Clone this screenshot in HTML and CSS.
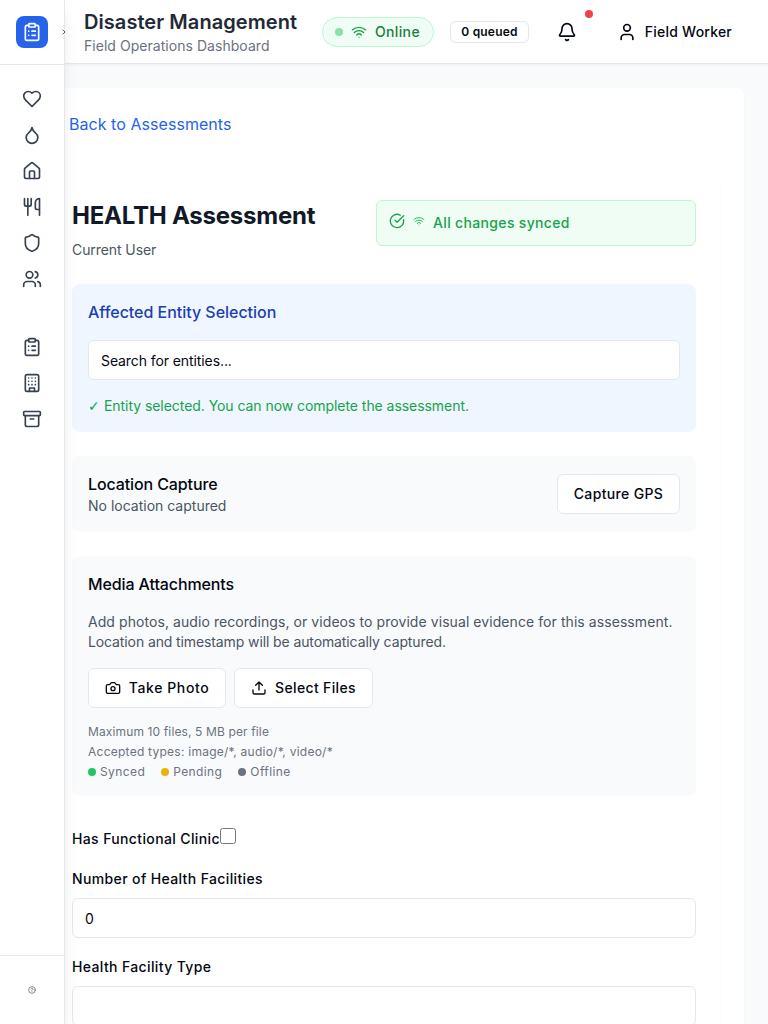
FILE: index.html
```html
<!DOCTYPE html>
<html lang="en">
<head>
<meta charset="utf-8">
<title>Disaster Management</title>
<link rel="stylesheet" href="styles.css">
</head>
<body>
<svg class="defs" aria-hidden="true">
  <symbol id="clipboard" viewBox="0 0 24 24"><rect width="8" height="4" x="8" y="2" rx="1"/><path d="M16 4h2a2 2 0 0 1 2 2v14a2 2 0 0 1-2 2H6a2 2 0 0 1-2-2V6a2 2 0 0 1 2-2h2"/><path d="M12 11h4M12 16h4M8 11h.01M8 16h.01"/></symbol>
  <symbol id="wifi" viewBox="0 0 24 24"><path d="M12 20h.01M2 8.82a15 15 0 0 1 20 0M5 12.859a10 10 0 0 1 14 0M8.5 16.429a5 5 0 0 1 7 0"/></symbol>
</svg>
<div class="app">
  <aside class="sidebar">
    <div class="sidebar-head">
      <div class="logo"><svg class="icon icon-md"><use href="#clipboard"/></svg></div>
      <svg class="icon toggle" viewBox="0 0 24 24"><path d="m9 18 6-6-6-6"/></svg>
    </div>
    <nav class="nav">
      <div class="nav-group">
        <a class="nav-item"><svg class="icon icon-md" viewBox="0 0 24 24"><path d="M19 14c1.49-1.46 3-3.21 3-5.5A5.5 5.5 0 0 0 16.500 3c-1.760 0-3 .5-4.500 2-1.500-1.500-2.740-2-4.500-2A5.500 5.500 0 0 0 2 8.500c0 2.300 1.500 4.050 3 5.500l7 7Z"/></svg></a>
        <a class="nav-item"><svg class="icon icon-md" viewBox="0 0 24 24"><path d="M12 22a7 7 0 0 0 7-7c0-2-1-3.900-3-5.500s-3.500-4-4-6.500c-.5 2.500-2 4.900-4 6.500C6 11.100 5 13 5 15a7 7 0 0 0 7 7z"/></svg></a>
        <a class="nav-item"><svg class="icon icon-md" viewBox="0 0 24 24"><path d="M15 21v-8a1 1 0 0 0-1-1h-4a1 1 0 0 0-1 1v8"/><path d="M3 10a2 2 0 0 1 .709-1.528l7-5.999a2 2 0 0 1 2.582 0l7 5.999A2 2 0 0 1 21 10v9a2 2 0 0 1-2 2H5a2 2 0 0 1-2-2z"/></svg></a>
        <a class="nav-item"><svg class="icon icon-md" viewBox="0 0 24 24"><path d="M3 2v7c0 1.100.9 2 2 2h4a2 2 0 0 0 2-2V2M7 2v20M21 15V2a5 5 0 0 0-5 5v6c0 1.100.9 2 2 2h3Zm0 0v7"/></svg></a>
        <a class="nav-item"><svg class="icon icon-md" viewBox="0 0 24 24"><path d="M20 13c0 5-3.500 7.500-7.660 8.950a1 1 0 0 1-.67-.01C7.500 20.500 4 18 4 13V6a1 1 0 0 1 1-1c2 0 4.500-1.200 6.240-2.720a1.170 1.170 0 0 1 1.520 0C14.510 3.810 17 5 19 5a1 1 0 0 1 1 1z"/></svg></a>
        <a class="nav-item"><svg class="icon icon-md" viewBox="0 0 24 24"><path d="M16 21v-2a4 4 0 0 0-4-4H6a4 4 0 0 0-4 4v2"/><circle cx="9" cy="7" r="4"/><path d="M22 21v-2a4 4 0 0 0-3-3.870M16 3.130a4 4 0 0 1 0 7.750"/></svg></a>
      </div>
      <div class="nav-group">
        <a class="nav-item"><svg class="icon icon-md"><use href="#clipboard"/></svg></a>
        <a class="nav-item"><svg class="icon icon-md" viewBox="0 0 24 24"><rect width="16" height="20" x="4" y="2" rx="2"/><path d="M9 22v-4h6v4M8 6h.01M16 6h.01M12 6h.01M12 10h.01M12 14h.01M16 10h.01M16 14h.01M8 10h.01M8 14h.01"/></svg></a>
        <a class="nav-item"><svg class="icon icon-md" viewBox="0 0 24 24"><rect width="20" height="5" x="2" y="3" rx="1"/><path d="M4 8v11a2 2 0 0 0 2 2h12a2 2 0 0 0 2-2V8M10 12h4"/></svg></a>
      </div>
    </nav>
    <div class="sidebar-foot"><svg class="icon help" viewBox="0 0 24 24"><circle cx="12" cy="12" r="10"/><path d="M9.090 9a3 3 0 0 1 5.830 1c0 2-3 3-3 3M12 17h.01"/></svg></div>
  </aside>
  <div class="page">
    <header class="topbar">
      <div class="brand">
        <h1 class="brand-title">Disaster Management</h1>
        <p class="brand-sub">Field Operations Dashboard</p>
      </div>
      <div class="status"><span class="dot dot-online"></span><svg class="icon icon-sm"><use href="#wifi"/></svg><span class="status-text">Online</span></div>
      <div class="queue">0 queued</div>
      <div class="bell">
        <svg class="icon icon-md" viewBox="0 0 24 24"><path d="M10.268 21a2 2 0 0 0 3.464 0"/><path d="M3.262 15.326A1 1 0 0 0 4 17h16a1 1 0 0 0 .740-1.673C19.410 13.956 18 12.499 18 8A6 6 0 0 0 6 8c0 4.499-1.411 5.956-2.738 7.326"/></svg>
        <span class="bell-badge"></span>
      </div>
      <div class="user"><svg class="icon icon-md" viewBox="0 0 24 24"><path d="M19 21v-2a4 4 0 0 0-4-4H9a4 4 0 0 0-4 4v2"/><circle cx="12" cy="7" r="4"/></svg><span>Field Worker</span></div>
    </header>
    <main class="main">
      <div class="panel">
        <a class="back">Back to Assessments</a>
        <div class="form">
          <div class="form-head">
            <div class="form-heading">
              <h2 class="form-title">HEALTH Assessment</h2>
              <p class="form-user">Current User</p>
            </div>
            <div class="sync">
              <svg class="icon icon-sm sync-check" viewBox="0 0 24 24"><path d="M21.801 10A10 10 0 1 1 17 3.335"/><path d="m9 11 3 3L22 4"/></svg>
              <svg class="icon sync-wifi"><use href="#wifi"/></svg>
              <span>All changes synced</span>
            </div>
          </div>
          <section class="card entity">
            <h3 class="card-title">Affected Entity Selection</h3>
            <div class="field entity-search">Search for entities...</div>
            <p class="entity-ok"><span class="tick">✓</span>Entity selected. You can now complete the assessment.</p>
          </section>
          <section class="card location">
            <div>
              <h3 class="card-title">Location Capture</h3>
              <p class="location-text">No location captured</p>
            </div>
            <button class="btn btn-gps">Capture GPS</button>
          </section>
          <section class="card media">
            <h3 class="card-title">Media Attachments</h3>
            <p class="media-text"><span class="media-lead">Add photos, audio recordings, or videos to provide visual evidence for this assessment.</span><br>Location and timestamp will be automatically captured.</p>
            <div class="btn-row">
              <button class="btn btn-photo"><svg class="icon icon-sm" viewBox="0 0 24 24"><path d="M14.500 4h-5L7 7H4a2 2 0 0 0-2 2v9a2 2 0 0 0 2 2h16a2 2 0 0 0 2-2V9a2 2 0 0 0-2-2h-3l-2.500-3z"/><circle cx="12" cy="13" r="3"/></svg>Take Photo</button>
              <button class="btn btn-files"><svg class="icon icon-sm" viewBox="0 0 24 24"><path d="M21 15v4a2 2 0 0 1-2 2H5a2 2 0 0 1-2-2v-4M17 8l-5-5-5 5M12 3v12"/></svg>Select Files</button>
            </div>
            <div class="notes">
              <p class="note-size">Maximum 10 files, 5 MB per file</p>
              <p class="note-types">Accepted types: image/*, audio/*, video/*</p>
              <div class="legend">
                <span class="legend-item"><i class="dot dot-green"></i>Synced</span>
                <span class="legend-item"><i class="dot dot-yellow"></i>Pending</span>
                <span class="legend-item"><i class="dot dot-gray"></i>Offline</span>
              </div>
            </div>
          </section>
          <div class="check-row"><label class="label">Has Functional Clinic</label><input class="checkbox" type="checkbox"></div>
          <div class="form-item">
            <label class="label">Number of Health Facilities</label>
            <div class="field">0</div>
          </div>
          <div class="form-item">
            <label class="label">Health Facility Type</label>
            <div class="field"></div>
          </div>
        </div>
      </div>
    </main>
  </div>
</div>
</body>
</html>
```
FILE: styles.css
```css
*, *::before, *::after { box-sizing: border-box; }
body, h1, h2, h3, p { margin: 0; }
body { font: 400 14px/20px Inter, "Liberation Sans", sans-serif; color: #030712; background: #f9fafb; overflow: hidden; }
.defs { position: absolute; width: 0; height: 0; }
.icon { display: block; flex: none; fill: none; stroke: currentColor; stroke-width: 2; stroke-linecap: round; stroke-linejoin: round; }
.icon-md { width: 20px; height: 20px; }
.icon-sm { width: 16px; height: 16px; }
.dot { display: block; flex: none; width: 8px; height: 8px; border-radius: 50%; }

.app { display: flex; height: 1024px; overflow: hidden; }

.sidebar { position: relative; z-index: 2; display: flex; flex-direction: column; flex: none; width: 65px; background: #fff; border-right: 1px solid #e5e7eb; box-shadow: 0 10px 15px -3px rgba(0,0,0,.1), 0 4px 6px -4px rgba(0,0,0,.1); }
.sidebar-head { display: flex; align-items: center; height: 65px; padding: 0 0 0 16px; border-bottom: 1px solid #e5e7eb; }
.logo { display: flex; align-items: center; justify-content: center; flex: none; width: 32px; height: 32px; border-radius: 8px; background: #2563eb; color: #fff; }
.toggle { width: 8px; height: 8px; margin-left: 12px; }
.nav { display: flex; flex-direction: column; flex: 1; gap: 32px; padding: 16px 8px; color: #374151; }
.nav-item { display: flex; align-items: center; justify-content: center; height: 36px; }
.sidebar-foot { display: flex; align-items: center; justify-content: center; height: 69px; border-top: 1px solid #e5e7eb; color: #4b5563; }
.help { width: 8px; height: 8px; }

.page { display: flex; flex-direction: column; flex: 1; min-width: 0; }
.topbar { display: flex; align-items: center; flex: none; height: 64px; padding: 0 36px 0 19px; background: #fff; border-bottom: 1px solid #e5e7eb; box-shadow: 0 1px 2px rgba(0,0,0,.05); white-space: nowrap; }
.brand { flex: none; width: 238px; }
.brand-title { font-size: 20px; line-height: 28px; font-weight: 600; letter-spacing: .06px; color: #1f2937; }
.brand-sub { letter-spacing: .04px; color: #6b7280; }
.status { display: flex; align-items: center; gap: 8px; width: 112px; height: 30px; padding: 0 12px; border: 1px solid #bbf7d0; border-radius: 15px; background: #f0fdf4; color: #16a34a; }
.status-text { font-weight: 500; letter-spacing: .35px; color: #15803d; }
.dot-online { background: #86e2a8; }
.queue { width: 79px; height: 22px; margin-left: 16px; border: 1px solid #e5e7eb; border-radius: 6px; font-size: 12px; line-height: 20px; font-weight: 600; letter-spacing: .2px; text-align: center; }
.bell { position: relative; margin-left: 28px; }
.bell-badge { position: absolute; top: -12px; right: -16px; width: 8px; height: 8px; border-radius: 50%; background: #ef4444; }
.user { display: flex; align-items: center; gap: 8px; margin-left: auto; font-weight: 500; letter-spacing: .22px; }

.main { padding: 24px 24px 0 0; }
.panel { height: 1400px; padding: 24px 24px 0 0; border-radius: 0 8px 0 0; background: #fff; box-shadow: 0 1px 2px rgba(0,0,0,.05); }
.back { display: block; padding-left: 4px; font-size: 16px; line-height: 24px; letter-spacing: .05px; color: #2563eb; }
.form { margin-top: 40px; padding: 24px 24px 0 7px; height: 1200px; border-radius: 0 8px 0 0; box-shadow: 0 1px 2px rgba(0,0,0,.05); background: #fff; }
.form-head { display: flex; justify-content: space-between; height: 84px; }
.form-title { font-size: 24px; line-height: 32px; font-weight: 700; letter-spacing: -.22px; color: #111827; }
.form-user { margin-top: 8px; letter-spacing: -.08px; color: #4b5563; }
.sync { display: flex; align-items: center; width: 320px; height: 46px; padding: 0 12px; border: 1px solid #bbf7d0; border-radius: 6px; background: #f0fdf4; color: #16a34a; font-weight: 500; letter-spacing: .34px; }
.sync-check { margin-bottom: 4px; }
.sync-wifi { width: 12px; height: 12px; margin: 0 8px 4px; color: #22c55e; }

.card { margin-bottom: 24px; padding: 16px; border-radius: 8px; background: #f9fafb; }
.card-title { font-size: 16px; line-height: 24px; font-weight: 500; letter-spacing: -.11px; }
.entity { height: 148px; background: #eff6ff; }
.entity .card-title { letter-spacing: -.03px; color: #1e40af; }
.field { height: 40px; padding: 10px 12px 8px; border: 1px solid #e5e7eb; border-radius: 6px; background: #fff; }
.entity-search { margin-top: 16px; letter-spacing: -.09px; }
.entity-ok { display: flex; margin-top: 16px; letter-spacing: -.055px; color: #16a34a; }
.tick { width: 16px; font-family: "DejaVu Sans", sans-serif; }
.location { display: flex; align-items: center; justify-content: space-between; height: 76px; }
.location-text, .media-text { color: #4b5563; }
.btn { display: flex; align-items: center; justify-content: center; gap: 8px; height: 40px; padding: 0; border: 1px solid #e5e7eb; border-radius: 6px; background: #fff; color: inherit; font: inherit; font-weight: 500; letter-spacing: .35px; }
.btn-gps { width: 123px; }
.btn-photo { width: 138px; letter-spacing: .6px; }
.btn-files { width: 139px; }
.media { height: 240px; }
.media-text { margin-top: 16px; letter-spacing: -.11px; white-space: nowrap; }
.media-lead { letter-spacing: .07px; }
.btn-row { display: flex; gap: 8px; margin-top: 16px; }
.notes { display: flex; flex-direction: column; gap: 4px; margin-top: 16px; font-size: 12px; line-height: 16px; color: #6b7280; }
.note-size { letter-spacing: .13px; }
.note-types { letter-spacing: .25px; }
.legend { display: flex; gap: 16px; letter-spacing: .4px; }
.legend-item { display: flex; align-items: center; gap: 4px; }
.dot-green { background: #22c55e; }
.dot-yellow { background: #eab308; }
.dot-gray { background: #6b7280; }

.check-row { display: flex; align-items: flex-start; height: 49px; padding-top: 8px; }
.check-row .label { padding-top: 1px; }
.checkbox { width: 16px; height: 16px; margin: 0; }
.label { display: block; font-weight: 500; letter-spacing: .37px; }
.form-item { height: 88px; }
.form-item .label { margin-bottom: 9px; }
```
